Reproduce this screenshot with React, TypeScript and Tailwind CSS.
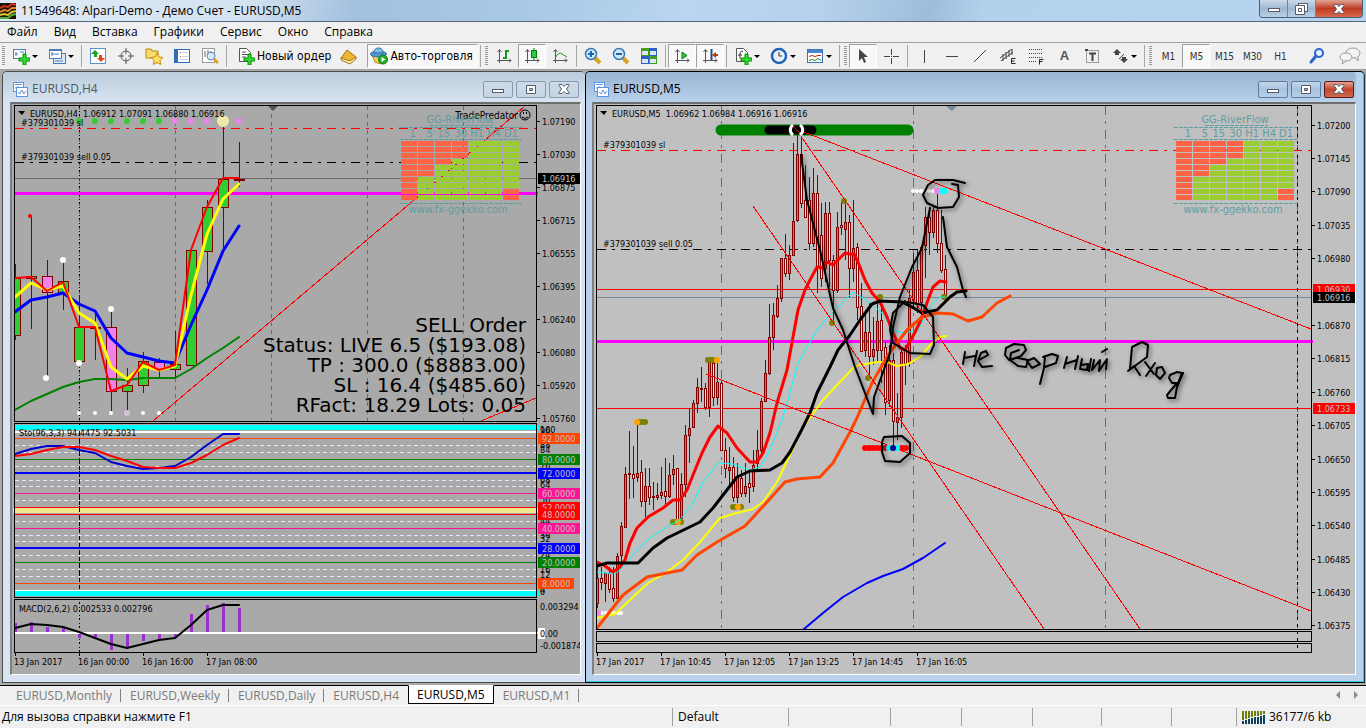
import type { ReactNode } from 'react'
import clsx from 'clsx'

const MAROON = '#800000'
const TEAL = '#5f9ea0'
const ROYAL = '#4169e1'

const MENU = ['Файл', 'Вид', 'Вставка', 'Графики', 'Сервис', 'Окно', 'Справка']

/* ---------- chart data: [high, low, bodyTop, bodyBottom, up] ---------- */

type Candle = [number, number, number, number, number]

const H4: Candle[] = [
  [264, 340, 278, 335, 1], [217, 329, 276, 278, 1], [260, 378, 276, 292, 0], [260, 310, 281, 292, 1],
  [295, 361, 327, 361, 1], [312, 360, 327, 327, 1], [308, 411, 327, 391, 0], [368, 411, 385, 391, 1],
  [352, 393, 361, 385, 1], [358, 377, 362, 369, 0], [331, 377, 364, 369, 1], [250, 365, 250, 365, 1],
  [200, 284, 207, 251, 1], [121, 250, 179, 207, 1], [142, 187, 179, 180, 1],
]

const M5: Candle[] = [
  [563, 608, 578, 603, 1], [567, 590, 578, 582, 0], [573, 602, 573, 583, 1], [567, 593, 573, 589, 0],
  [567, 602, 588, 598, 0], [553, 598, 556, 598, 1], [522, 563, 526, 555, 1], [467, 527, 474, 527, 1],
  [431, 499, 473, 474, 0], [446, 498, 474, 478, 0], [422, 482, 473, 477, 1], [460, 507, 472, 501, 0],
  [468, 517, 486, 501, 1], [468, 505, 486, 497, 0], [482, 510, 496, 497, 0], [483, 500, 495, 497, 1],
  [467, 499, 492, 495, 1], [458, 504, 491, 496, 0], [463, 498, 475, 496, 1], [455, 485, 469, 474, 1],
  [468, 520, 468, 520, 0], [473, 520, 484, 518, 1], [425, 497, 435, 484, 1], [408, 463, 428, 435, 1],
  [400, 428, 403, 427, 1], [378, 413, 387, 403, 1], [367, 402, 388, 389, 0], [383, 410, 388, 407, 0],
  [362, 417, 362, 407, 1], [362, 406, 363, 397, 0], [360, 405, 382, 397, 1], [381, 450, 383, 450, 0],
  [438, 478, 450, 468, 0], [447, 487, 467, 470, 1], [457, 502, 467, 497, 0], [463, 503, 477, 497, 1],
  [470, 497, 478, 493, 0], [463, 497, 486, 493, 1], [473, 503, 483, 487, 0], [450, 492, 465, 486, 1],
  [430, 470, 450, 463, 1], [398, 453, 401, 450, 1], [360, 402, 373, 401, 1], [304, 375, 337, 373, 1],
  [303, 350, 315, 337, 1], [285, 318, 298, 316, 1], [258, 302, 258, 298, 1], [234, 277, 258, 273, 0],
  [245, 280, 255, 273, 1], [143, 256, 221, 255, 1], [130, 222, 154, 220, 1], [138, 208, 154, 203, 0],
  [165, 218, 200, 217, 0], [177, 250, 200, 243, 0], [168, 247, 193, 243, 1], [175, 293, 193, 267, 0],
  [203, 287, 235, 278, 0], [202, 282, 213, 268, 1], [202, 287, 213, 260, 0], [255, 322, 260, 290, 0],
  [212, 293, 227, 290, 1], [202, 235, 225, 227, 0], [200, 260, 222, 229, 1], [215, 297, 222, 268, 0],
  [200, 282, 248, 268, 1], [243, 320, 247, 307, 0], [283, 352, 306, 351, 0], [313, 357, 332, 350, 1],
  [303, 375, 332, 356, 0], [317, 365, 349, 356, 1], [300, 363, 321, 350, 1], [300, 383, 320, 350, 0],
  [342, 415, 347, 402, 0], [345, 407, 360, 400, 1], [353, 446, 360, 421, 0], [393, 440, 417, 422, 1],
  [347, 428, 352, 417, 1], [345, 385, 348, 363, 0], [290, 367, 298, 362, 1], [253, 307, 272, 300, 1],
  [250, 313, 270, 303, 0], [245, 313, 247, 302, 1], [207, 278, 217, 245, 1], [212, 255, 217, 232, 0],
  [207, 238, 210, 232, 1], [193, 253, 210, 243, 0], [210, 273, 243, 270, 0], [255, 297, 269, 297, 0],
]

const H4_PRICES = ['1.07190', '1.07030', '1.06875', '1.06715', '1.06555', '1.06395', '1.06240', '1.06080', '1.05920', '1.05760']
const M5_PRICES: [string, number][] = [
  ['1.07200', 125], ['1.07145', 158], ['1.07090', 191], ['1.07035', 225], ['1.06980', 258], ['1.06870', 325],
  ['1.06815', 358], ['1.06760', 392], ['1.06705', 425], ['1.06650', 459], ['1.06595', 492], ['1.06540', 525],
  ['1.06485', 559], ['1.06430', 592], ['1.06375', 625],
]

const STO_TAGS: [string, number, string, number][] = [
  ['92.0000', 438, '#ff4500', 42], ['80.0000', 459, '#008000', 42], ['72.0000', 473, '#0000ff', 42],
  ['60.0000', 493, '#ff1493', 42], ['52.0000', 507, '#ff0000', 42], ['48.0000', 514, '#ff0000', 42],
  ['40.0000', 528, '#ff1493', 42], ['28.0000', 548, '#0000ff', 42], ['20.0000', 562, '#008000', 42],
  ['8.0000', 583, '#ff4500', 36],
]
const STO_SCALE: [string, number][] = [
  ['100', 430], ['96', 431], ['88', 445], ['84', 450], ['76', 466], ['68', 480], ['64', 485], ['56', 500],
  ['44', 521], ['36', 535], ['32', 539], ['24', 555], ['16', 570], ['12', 575], ['4', 590], ['0', 592],
]
const STO_DASHES = [445, 452, 466, 480, 486, 500, 521, 535, 541, 555, 569, 576]

const MACD = [623, 622, 627, 628, 638, 637, 650, 648, 641, 640, 637, 614, 605, 603, 608]

/* ---------- chart pieces ---------- */

function Label({ x, y, children, fill = '#000' }: { x: number; y: number; children: ReactNode; fill?: string }) {
  return (
    <text x={x} y={y} fill={fill} className="text-[9px] whitespace-pre">
      {children}
    </text>
  )
}

function PriceTag({ x, y, text, fill, width = 42, color = '#c0c0c0' }: { x: number; y: number; text: string; fill: string; width?: number; color?: string }) {
  return (
    <g>
      <rect x={x} y={y - 5} width={width} height={11} fill={fill} />
      <Label x={x + 4} y={y + 4} fill={color}>{text}</Label>
    </g>
  )
}

function Candles({ data, x0, step, half, up, down }: { data: Candle[]; x0: number; step: number; half: number; up: string; down: string }) {
  return (
    <g stroke={MAROON} strokeWidth={1} shapeRendering="crispEdges">
      {data.map(([hi, lo, top, bottom, isUp], i) => {
        const x = x0 + i * step
        return (
          <g key={i}>
            <line x1={x} x2={x} y1={hi} y2={lo} />
            <rect x={x - half} y={top + 0.5} width={half * 2} height={Math.max(bottom - top, 1)} fill={isUp ? up : down} />
          </g>
        )
      })}
    </g>
  )
}

function Poly({ points, color, width }: { points: string; color: string; width: number }) {
  return <polyline points={points} fill="none" stroke={color} strokeWidth={width} strokeLinejoin="round" strokeLinecap="round" />
}

function Dots({ xs, y, r, fill }: { xs: number[]; y: number; r: number; fill: string }) {
  return <>{xs.map((x) => <circle key={x} cx={x} cy={y} r={r} fill={fill} />)}</>
}

// how many rows from the top are red, column by column
const RIVER_RED = [10, 6, 4, 3, 0, 0, 0]
const RIVER_HEAD = ['1', '5', '15', '30', 'H1', 'H4', 'D1']

function RiverFlow({ x }: { x: number }) {
  return (
    <g>
      <g fill={TEAL} className="font-['DejaVu_Sans_Condensed','DejaVu_Sans',sans-serif] text-[11px]">
        <text x={x + 59} y={123} textAnchor="middle">GG-RiverFlow</text>
        {RIVER_HEAD.map((h, i) => (
          <text key={h} x={x + 15 + i * 17} y={137} textAnchor="end">{h}</text>
        ))}
        <text x={x + 57} y={213} textAnchor="middle">www.fx-ggekko.com</text>
      </g>
      <g stroke={TEAL} strokeDasharray="4 1" shapeRendering="crispEdges">
        <path d={`M${x + 29} 125.5h63M${x - 2} 127.5h123M${x - 2} 139.5h123M${x - 2} 203.5h123`} />
      </g>
      {RIVER_RED.map((red, c) =>
        Array.from({ length: 10 }, (_, r) => (
          <rect
            key={`${c}-${r}`}
            x={x + c * 17}
            y={141 + r * 6}
            width={16}
            height={5}
            fill={r < red || (c === 6 && r > 7) ? '#ff6347' : '#9acd32'}
          />
        )),
      )}
    </g>
  )
}

function H4Chart() {
  return (
    <svg viewBox="12 104 568 570" className="block h-auto w-full bg-[#a9a9a9] font-['DejaVu_Sans_Condensed','DejaVu_Sans',sans-serif]" role="img" aria-label="EURUSD,H4">
      <g shapeRendering="crispEdges" fill="none">
        <path d="M79.5 106V421M175.5 106V421M271.5 106V421M367.5 106V421M463.5 106V421" stroke={ROYAL} strokeDasharray="4 4" />
        <path d="M79.5 106V652" stroke="#000" strokeDasharray="2 3 1 2" />
        <path d="M15 128.5H536" stroke="#f00" strokeDasharray="9 6 3 6" />
        <path d="M15 162.5H536" stroke="#000" strokeDasharray="9 6 3 6" />
        <path d="M15 178.5H536" stroke="#696969" />
        <path d="M15 193.5H538" stroke="#f0f" strokeWidth={3} />
        <path d="M153 421L524 107M481 421L536 398" stroke="#f00" />
      </g>
      <path d="M268 106h10l-5 5z" fill="#555" />

      <clipPath id="h4-plot"><rect x="15" y="106" width="521" height="315" /></clipPath>
      <g clipPath="url(#h4-plot)">
        <Candles data={H4} x0={15.5} step={16} half={5} up="#32cd32" down="#ee82ee" />
        <Poly color="#008000" width={2} points="15,410 31,401 47,394 63,387 79,382 95,379 111,379 127,380 143,378 175,378 191,369 207,358 223,348 239,337" />
        <Poly color="#0000ff" width={3} points="15,312 31,300 47,297 63,293 79,304 95,311 111,338 127,353 143,357 159,361 175,363 191,325 207,290 223,251 239,226" />
        <Poly color="#ffff00" width={3} points="15,297 31,283 47,290 63,286 79,313 95,323 111,367 127,379 143,366 159,370 175,366 191,295 207,234 223,199 239,184" />
        <Poly color="#ff0000" width={2} points="15,278 31,277 47,291 63,282 79,327 95,327 111,391 127,385 143,362 159,370 175,365 191,250 207,207 223,178 239,178" />
      </g>
      <path d="M234 179.5h11" stroke={MAROON} strokeWidth={1} />
      <circle cx="30" cy="216" r="2" fill="#f00" />
      <circle cx="46" cy="378" r="3" fill="#fff" />
      <circle cx="63" cy="260" r="3" fill="#fff" />
      <circle cx="79" cy="363" r="3" fill="#fff" />
      <circle cx="111" cy="309" r="3" fill="#fff" />
      <Dots xs={[79, 95, 111, 143, 159]} y={413} r={2} fill="#fff" />
      <Dots xs={[127]} y={413} r={3} fill="#d8bfd8" />
      <Dots xs={[79, 95, 111, 127, 143, 159]} y={121} r={3} fill="#32cd32" />
      <Dots xs={[175, 191, 207, 239]} y={121} r={3} fill="#ee82ee" />
      <circle cx="223" cy="121" r="6" fill="#eee8aa" />

      <path d="M18 111h7l-3 4z" />
      <Label x={30} y={117}>EURUSD,H4  1.06912 1.07091 1.06880 1.06916</Label>
      <Label x={21} y={126}>#379301039 sl</Label>
      <Label x={21} y={160}>#379301039 sell 0.05</Label>
      <text x="518" y="119" textAnchor="end" className="text-[10px]">TradePredator</text>
      <g fill="none" stroke="#000">
        <circle cx="525" cy="115" r="5" />
        <path d="M522 117q3 3 6 0" />
      </g>
      <path d="M523 112h1v2h-1zM526 112h1v2h-1z" />
      <RiverFlow x={401} />

      <g className="font-['DejaVu_Sans',sans-serif] text-[20px]" textAnchor="end">
        <text x="526" y="332">SELL Order</text>
        <text x="526" y="352">Status: LIVE 6.5 ($193.08)</text>
        <text x="526" y="372">TP : 300.0 ($8883.00)</text>
        <text x="526" y="392">SL : 16.4 ($485.60)</text>
        <text x="526" y="412">RFact: 18.29 Lots: 0.05</text>
      </g>

      {/* stochastic */}
      <g shapeRendering="crispEdges" fill="none">
        {STO_DASHES.map((y) => <path key={y} d={`M15 ${y}.5H536`} stroke="#e6e6fa" strokeDasharray="4 3" />)}
        <path d="M15 431.5H536M15 590.5H536" stroke="#fff" strokeWidth={2} />
        <path d="M15 438.5H536M15 583.5H536" stroke="#ff4500" />
        <path d="M15 459.5H536M15 562.5H536" stroke="#008000" />
        <path d="M15 473H536M15 548H536" stroke="#00f" strokeWidth={2} />
        <path d="M15 493.5H536M15 528.5H536" stroke="#ff1493" />
        <path d="M15 507.5H536M15 514.5H536" stroke="#f00" />
        <path d="M13 510.5H538" stroke="#f0e68c" strokeWidth={5} />
        <path d="M79.5 424V597" stroke="#000" strokeDasharray="4 3" />
      </g>
      <path d="M13 427.5H539M13 593.5H539" stroke="#0ff" strokeWidth={5} />
      <Poly color="#0000cd" width={2} points="15,454 31,449 47,446 63,446 79,450 95,453 111,462 127,466 143,469 159,468 175,466 191,457 207,445 223,434 239,434" />
      <Poly color="#ff0000" width={2} points="15,456 31,454 47,450 63,447 79,447 95,450 111,456 127,461 143,467 159,468 175,468 191,463 207,455 223,445 239,438" />
      <Label x={19} y={436}>Sto(96,3,3) 94.4475 92.5031</Label>

      {/* macd */}
      <g stroke="#9932cc" strokeWidth={3} shapeRendering="crispEdges">
        {MACD.map((y, i) => <path key={i} d={`M${15.5 + i * 16} 633V${y}`} />)}
      </g>
      <path d="M15 633H538" stroke="#fff" strokeWidth={2} />
      <Poly color="#000000" width={2} points="15,628 31,624 47,625 63,627 79,632 95,638 111,644 127,648 143,644 159,640 175,638 191,625 207,610 223,605 239,605" />
      <Label x={19} y={612}>MACD(2,6,2) 0.002533 0.002796</Label>

      <g shapeRendering="crispEdges" fill="none" stroke="#000">
        <path d="M14.5 105.5H536.5V421.5H14.5zM14.5 423.5H536.5V597.5H14.5zM14.5 599.5H536.5V652.5H14.5z" />
        <path d="M15.5 652v4M79.5 652v4M143.5 652v4M207.5 652v4" />
        {H4_PRICES.map((p, i) => <path key={p} d={`M537 ${121.5 + i * 33}h3`} />)}
      </g>

      {H4_PRICES.map((p, i) => <Label key={p} x={542} y={125 + i * 33}>{p}</Label>)}
      <PriceTag x={538} y={178} text="1.06916" fill="#000" />
      {STO_SCALE.map(([t, y]) => <Label key={t} x={540} y={y + 3}>{t}</Label>)}
      {STO_TAGS.map(([t, y, fill, w]) => <PriceTag key={t} x={538} y={y} text={t} fill={fill} width={w} />)}
      <Label x={540} y={610}>0.003294</Label>
      <rect x="538" y="628" width="7" height="11" fill="#fff" />
      <Label x={540} y={637}>0.00</Label>
      <Label x={540} y={649}>-0.001874</Label>

      <Label x={14} y={665}>13 Jan 2017</Label>
      <Label x={78} y={665}>16 Jan 00:00</Label>
      <Label x={142} y={665}>16 Jan 16:00</Label>
      <Label x={206} y={665}>17 Jan 08:00</Label>
    </svg>
  )
}

function Handwriting() {
  return (
    <g fill="none" stroke="#000" strokeWidth={2} strokeLinecap="round" strokeLinejoin="round" className="drop-shadow-[2px_2px_2px_rgba(0,0,0,0.5)]">
      <path d="M801 155L807 200L820 250L833 308L843 330L855 367L873 414L874 397L890 353L893 327L900 297L912 267L922 248L927 223L930 208" />
      <path d="M943 217L947 247L957 267L963 290L966 297" />
      <path d="M965 183L953 180H935L928 185L923 195L927 203L938 208L953 207L959 197L958 185L952 184" />
      <path d="M905 301L893 313L890 330L893 343L910 353L930 354L934 345L933 317L923 305L907 302" />
      <path d="M882 442L884 437L902 436L910 443V453L900 462L885 461L882 452z" />
      {/* не верный вход */}
      <path d="M965 352L963 364M964 358L975 356M977 351L974 366M979 360L988 355L986 351L981 353L978 361L982 367L992 366" />
      <path d="M1009 360L1005 355L1006 348L1014 344L1024 345L1026 350L1021 356L1010 360L1011 353L1019 350M1018 358L1028 360L1026 367L1018 366L1010 360" />
      <path d="M1027 361L1034 358L1040 364L1032 368L1027 361M1045 356L1044 368L1040 384M1043 357L1052 354L1058 356L1056 363L1045 367" />
      <path d="M1067 357L1064 368M1065 364L1077 360M1078 356L1075 369M1082 359L1080 369L1087 370L1088 364L1081 365M1091 359L1089 371" />
      <path d="M1094 360L1092 370L1100 360L1099 371L1107 359L1106 369M1102 352L1107 349" />
      <path d="M1130 369L1132 347L1142 342L1148 345L1147 357L1128 371L1134 366L1140 375" />
      <path d="M1145 362L1154 374M1155 363L1146 376M1157 368L1162 367L1165 373L1160 379L1156 375z" />
      <path d="M1170 375L1177 372L1182 373L1178 383L1172 383L1169 378zM1183 373L1177 387L1175 398L1168 398L1167 395L1177 383" />
    </g>
  )
}

function M5Chart() {
  return (
    <svg viewBox="594 104 761 570" className="block h-auto w-full bg-[#c0c0c0] font-['DejaVu_Sans_Condensed','DejaVu_Sans',sans-serif]" role="img" aria-label="EURUSD,M5">
      <g shapeRendering="crispEdges" fill="none">
        <path d="M721.5 106V629M913.5 106V629M1105.5 106V629M1297.5 106V629" stroke={ROYAL} strokeDasharray="9 6 3 6" />
        <path d="M1297.5 106V652" stroke="#000" strokeDasharray="3 4" />
        <path d="M597 150.5H1311" stroke="#f00" strokeDasharray="9 6 3 6" />
        <path d="M597 249.5H1311" stroke="#000" strokeDasharray="9 6 3 6" />
        <path d="M597 289.5H1311M597 408.5H1311" stroke="#f00" />
        <path d="M597 297.5H1311" stroke="#778899" />
        <path d="M597 341.5H1313" stroke="#f0f" strokeWidth={3} />
      </g>
      <path d="M946 106h11l-5 5z" fill="#778899" />
      <path d="M721 130H908" stroke="#008000" strokeWidth={11} strokeLinecap="round" />
      <path d="M769 130H812" stroke="#000" strokeWidth={9} strokeLinecap="round" />

      <clipPath id="m5-plot"><rect x="597" y="106" width="714" height="523" /></clipPath>
      <g clipPath="url(#m5-plot)">
        <Candles data={M5} x0={597.5} step={4} half={1} up="#32cd32" down="#ffe4e1" />
        <Dots xs={[639, 642, 645]} y={422} r={3} fill="#808000" />
        <Dots xs={[637]} y={422} r={3} fill="#ffa500" />
        <Dots xs={[708, 711, 714]} y={360} r={3} fill="#808000" />
        <Dots xs={[717]} y={360} r={3} fill="#ffa500" />
        <Dots xs={[673, 676, 681]} y={522} r={3} fill="#808000" />
        <Dots xs={[678]} y={522} r={3} fill="#ffa500" />
        <Dots xs={[733, 736, 741]} y={507} r={3} fill="#808000" />
        <Dots xs={[738]} y={507} r={3} fill="#ffa500" />
        <circle cx="844" cy="201" r="3" fill="#808000" />
        <circle cx="832" cy="323" r="3" fill="#808000" />
        <circle cx="880" cy="297" r="3" fill="#808000" />
        <circle cx="868" cy="378" r="3" fill="#808000" />
        <circle cx="944" cy="297" r="3" fill="#808000" />
        <Dots xs={[602, 606, 610, 614, 618, 621]} y={613} r={2} fill="#fff" />
        <circle cx="598" cy="613" r="3" fill="#ee82ee" />

        <Poly color="#0000ff" width={2} points="804,629 823,613 843,597 867,583 883,576 903,569 923,558 945,543" />
        <Poly color="#00ffff" width={1} points="597,572 615,574 622,568 637,550 650,538 670,525 680,520 693,503 703,482 718,463 733,464 750,470 760,467 770,450 782,420 787,403 798,363 817,330 828,317 840,305 853,292 870,303 882,313 893,330 905,333 918,330 927,313 933,303 940,297 945,297" />
        <Poly color="#ffff00" width={2} points="597,618 615,614 648,583 667,572 683,560 700,542 720,518 733,514 753,509 763,502 777,482 790,455 803,427 823,400 840,382 855,366 877,362 887,362 897,366 908,364 920,357 932,343 940,337 946,336" />
        <Poly color="#ff0000" width={3} points="597,562 605,566 613,572 620,567 625,560 630,543 637,528 648,517 663,508 673,500 680,500 687,490 693,475 702,453 710,437 718,426 727,433 737,448 750,462 757,462 763,453 770,433 777,403 787,370 793,337 798,310 805,290 810,280 817,267 822,268 827,262 833,265 845,253 850,254 854,254 858,262 865,280 872,293 880,302 887,317 893,333 900,348 905,350 912,338 920,322 928,300 933,287 940,281 946,282" />
        <Poly color="#000000" width={3} points="597,566 607,563 638,563 653,548 667,538 700,522 713,508 737,477 750,471 770,470 782,463 790,452 800,433 810,413 817,393 830,367 838,350 850,335 860,320 872,304 880,301 902,302 912,307 922,313 937,310 950,297 957,292 966,291" />
        <Poly color="#ff4500" width={3} points="597,628 623,595 647,577 682,570 697,555 717,542 745,526 767,502 785,482 797,479 820,477 833,463 850,432 857,418 872,383 888,355 907,330 922,317 937,313 953,314 968,321 982,317 997,303 1010,296" />
        <path d="M796 129L1311 329M796 129L1140 629M753 206L1044 629M706 374L1311 611" stroke="#f00" shapeRendering="crispEdges" />
      </g>

      <circle cx="797" cy="130" r="4" fill="#000" />
      <path d="M793 125a6 6 0 0 0 0 10M800 125a6 6 0 0 1 0 10" fill="none" stroke="#fff" strokeWidth={3} />
      <path d="M794 127L800 133" stroke="#f00" />
      <Dots xs={[913, 917, 921, 925, 929, 933]} y={191} r={2} fill="#fff" />
      <circle cx="937" cy="191" r="3" fill="#ee82ee" />
      <Dots xs={[942, 945]} y={191} r={3} fill="#0ff" />
      <Dots xs={[865, 869, 873, 877, 881, 885, 902, 906]} y={448} r={3} fill="#f00" />
      <Dots xs={[889, 897]} y={448} r={3} fill="#0ff" />
      <circle cx="893" cy="448" r="3" fill="#00008b" />
      <Handwriting />

      <path d="M600 111h7l-3 4z" />
      <Label x={612} y={117}>EURUSD,M5  1.06962 1.06984 1.06916 1.06916</Label>
      <Label x={603} y={148}>#379301039 sl</Label>
      <Label x={603} y={247}>#379301039 sell 0.05</Label>
      <RiverFlow x={1176} />

      <g shapeRendering="crispEdges" fill="none" stroke="#000">
        <path d="M596.5 105.5H1311.5V629.5H596.5zM596.5 631.5H1311.5V641.5H596.5zM596.5 643.5H1311.5V652.5H596.5z" />
        <path d="M597.5 652v4M661.5 652v4M725.5 652v4M789.5 652v4M853.5 652v4M917.5 652v4" />
        {M5_PRICES.map(([p, y]) => <path key={p} d={`M1312 ${y}.5h3`} />)}
      </g>
      {M5_PRICES.map(([p, y]) => <Label key={p} x={1317} y={y + 4}>{p}</Label>)}
      <PriceTag x={1313} y={289} text="1.06930" fill="#f00" />
      <PriceTag x={1313} y={297} text="1.06916" fill="#000" />
      <PriceTag x={1313} y={408} text="1.06733" fill="#f00" />

      <Label x={596} y={665}>17 Jan 2017</Label>
      <Label x={660} y={665}>17 Jan 10:45</Label>
      <Label x={724} y={665}>17 Jan 12:05</Label>
      <Label x={788} y={665}>17 Jan 13:25</Label>
      <Label x={852} y={665}>17 Jan 14:45</Label>
      <Label x={916} y={665}>17 Jan 16:05</Label>
    </svg>
  )
}

/* ---------- icons ---------- */

function Icon({ children, size = 18 }: { children: ReactNode; size?: number }) {
  return (
    <svg width={size} height={size} viewBox="0 0 18 18" fill="none" className="shrink-0">
      {children}
    </svg>
  )
}

const Plus = ({ x = 7, y = 7 }: { x?: number; y?: number }) => (
  <path d={`M${x + 4} ${y}h3v4h4v3h-4v4h-3v-4h-4v-3h4z`} fill="#2ee02e" stroke="#0a8a0a" />
)
const Axes = () => <path d="M4.500 3V16M2 13.500H16M2.500 5L4.500 2.500L6.500 5M14 11.500L16 13.500L14 15.500" stroke="#555" />

const NewChartIcon = () => (
  <Icon><rect x="1.500" y="2.500" width="12" height="9" fill="#fff" stroke="#4a7ebb" /><path d="M4 5v4M3 7h3M8 5h4" stroke="#4a7ebb" /><Plus /></Icon>
)
const ProfilesIcon = () => (
  <Icon><rect x="5.500" y="6.500" width="12" height="10" fill="#dce9f8" stroke="#4a7ebb" /><rect x="1.500" y="2.500" width="12" height="9" fill="#fff" stroke="#4a7ebb" /><path d="M2 3h11" stroke="#4a7ebb" strokeWidth={2} /><path d="M4 5v4M3 7h8M7 14h8" stroke="#4a7ebb" /></Icon>
)
const MarketIcon = () => (
  <Icon><rect x="1.500" y="1.500" width="15" height="15" fill="#fff" stroke="#5b8fd0" /><path d="M6 3l4 4h-2v3h-3v-3h-3z" fill="#1aa51a" /><path d="M12 15l-4-4h2v-3h3v3h3z" fill="#e04a1f" /></Icon>
)
const TargetIcon = () => (
  <Icon><circle cx="9" cy="9" r="5" stroke="#555" /><path d="M9 1v6M9 11v6M1 9h6M11 9h6" stroke="#555" /></Icon>
)
const StarFolderIcon = () => (
  <Icon><path d="M1 2h5l1 2h6v7H1z" fill="#f7dc6f" stroke="#b8860b" /><path d="M12 6l2 4 4 .5-3 3 .8 4L12 15.500 8.300 17.500 9 13.500 6 10.500l4-.5z" fill="#ffe066" stroke="#c98a10" /></Icon>
)
const DataIcon = () => (
  <Icon><rect x="1.500" y="2.500" width="15" height="13" fill="#fff" stroke="#2f6fb5" /><path d="M2 3h3v12H2z" fill="#2f6fb5" /><path d="M7 5.500h1M7 9.500h1" stroke="#e04a1f" /><path d="M9 5.500h6M9 9.500h6M7 12.500h8" stroke="#bcd3ee" /></Icon>
)
const TesterIcon = () => (
  <Icon><rect x="1.500" y="1.500" width="12" height="14" fill="#fff" stroke="#999" /><path d="M4 4v6M7 3v5M10 4v3" stroke="#666" /><circle cx="10" cy="9" r="4" fill="#cfe4fa" fillOpacity=".8" stroke="#5c87b8" /><path d="M13 12l4 4" stroke="#d9a520" strokeWidth={3} /></Icon>
)
const OrderIcon = () => (
  <Icon><path d="M2.500 1.500h7l4 4v9h-11z" fill="#fff" stroke="#555" /><path d="M5 5h4M5 7.500h6M5 10h4" stroke="#555" /><Plus /></Icon>
)
const BookIcon = () => (
  <Icon><path d="M1 11L7 3l9 7-6 6z" fill="#efb632" stroke="#a5720c" /><path d="M1 11l9 3 6-4v2l-6 5-9-4z" fill="#fff3c4" stroke="#a5720c" /></Icon>
)
const AutoIcon = () => (
  <Icon><path d="M2 8h13l-2 7q-4 3-8 0z" fill="#f5cf57" stroke="#b98a14" /><ellipse cx="8.500" cy="7" rx="8" ry="3" fill="#4e9ad4" stroke="#2d6ea5" /><path d="M4 6q0-5 4.500-5T13 6z" fill="#7fbde8" stroke="#2d6ea5" /><circle cx="13" cy="12.500" r="4.500" fill="#1fb01f" stroke="#0c7a0c" /><path d="M11.500 10v5l4-2.500z" fill="#fff" /></Icon>
)
const BarsIcon = () => <Icon><Axes /><path d="M11 3v9M11 4h3M8 11h3" stroke="#1a9a1a" strokeWidth={2} /></Icon>
const CandleIcon = () => <Icon><Axes /><path d="M11 1v12" stroke="#0c7a0c" /><rect x="8.500" y="3.500" width="5" height="7" fill="#2ecc40" stroke="#0c7a0c" /></Icon>
const LineIcon = () => <Icon><Axes /><path d="M4 11q4-7 7-4l5 3" stroke="#1a9a1a" /></Icon>
const ZoomIcon = ({ minus = false }: { minus?: boolean }) => (
  <Icon><path d="M11 11l5 5" stroke="#d9a520" strokeWidth={4} /><circle cx="7" cy="7" r="5.500" fill="#cfe6fb" stroke="#3a78b5" strokeWidth={1.500} /><path d={minus ? 'M4 7h6' : 'M4 7h6M7 4v6'} stroke="#1d66b0" strokeWidth={2} /></Icon>
)
const TileIcon = () => (
  <Icon><path d="M1 1h8v8H1zM9 9h8v8H9z" fill="#3f9e1f" /><path d="M9 1h8v8H9zM1 9h8v8H1z" fill="#2d5fc4" /><path d="M2 4h6v4H2zM10 4h6v4h-6zM2 12h6v4H2zM10 12h6v4h-6z" fill="#dbe9f7" /></Icon>
)
const ScrollIcon = () => <Icon><Axes /><path d="M9 5v7l5-3.500z" fill="#2ecc40" stroke="#0c7a0c" /></Icon>
const ShiftIcon = () => <Icon><Axes /><path d="M10.500 2v11" stroke="#1d4f8c" strokeWidth={2} /><path d="M11 8l4-3v2h2v2h-2v2z" fill="#c0390b" /></Icon>
const IndicatorIcon = () => (
  <Icon><path d="M2.500 1.500h7l4 4v9h-11z" fill="#fff" stroke="#555" /><path d="M9 4.500q-3-1-3 3v4M4 8h4" stroke="#333" /><Plus /></Icon>
)
const ClockIcon = () => (
  <Icon><circle cx="9" cy="9" r="7" fill="#fff" stroke="#1e63b8" strokeWidth={2.500} /><circle cx="9" cy="9" r="5" fill="#e3f0fc" /><path d="M9 5v4h3" stroke="#333" /></Icon>
)
const TemplateIcon = () => (
  <Icon><rect x="1.500" y="2.500" width="15" height="13" fill="#fff" stroke="#3f74b8" /><path d="M2 3h14v3H2z" fill="#4a86cf" /><path d="M3 9.500l3-1 3 1 3-1 3 0" stroke="#b03010" /><path d="M3 13.500l3-1 3 1 3-2 3 2" stroke="#2a8a2a" /></Icon>
)
const CursorIcon = () => <Icon><path d="M5 2v12l3-3 2 5 2-1-2-5h4z" fill="#444" /></Icon>
const CrossIcon = () => <Icon><path d="M9.500 2v6M9.500 11v6M2 9.500h6M11 9.500h6M9 9.500h1" stroke="#444" /></Icon>
const VLineIcon = () => <Icon><path d="M9.500 3v13" stroke="#444" /></Icon>
const HLineIcon = () => <Icon><path d="M3 9.500h12" stroke="#444" /></Icon>
const TrendIcon = () => <Icon><path d="M3 15L15 3" stroke="#444" /></Icon>
const ChannelIcon = () => (
  <Icon><path d="M1 11L13 2M2 14L14 5M4 7l0 7M7 5l0 7M10 3l0 7M13 2v6" stroke="#444" /><path d="M16.500 11.500h-4v5h4M12.500 14h3" stroke="#222" /></Icon>
)
const FiboIcon = () => (
  <Icon><path d="M2 2.500h14M2 6.500h14M2 10.500h14M2 14.500h8" stroke="#444" strokeDasharray="1 1" /><path d="M16.500 12.500h-4v5M12.500 14.500h3" stroke="#222" /></Icon>
)
const LabelIcon = () => <Icon><rect x="3.500" y="3.500" width="12" height="12" stroke="#444" strokeDasharray="1 1" /><path d="M6 6.500h7M9.500 6v8" stroke="#444" strokeWidth={2} /><path d="M2 2h3v2H2z" fill="#444" /></Icon>
const ArrowsIcon = () => <Icon><path d="M6 2l4 4h-2v2h-4v-2h-2zM13 16l-4-4h2v-2h4v2h2z" fill="#444" /><path d="M8 12l5-5" stroke="#444" /></Icon>
const SearchIcon = () => <Icon><circle cx="11" cy="6" r="4" fill="#e8f1fd" stroke="#2a62d0" strokeWidth={2} /><path d="M8 9l-5 6" stroke="#2a62d0" strokeWidth={3} strokeLinecap="round" /></Icon>
const ChatIcon = () => (
  <svg width={24} height={18} viewBox="0 0 24 18" fill="#f4f4f4" stroke="#999">
    <ellipse cx="15" cy="6" rx="7" ry="5" /><path d="M17 10l3 4v-5" /><ellipse cx="8" cy="10" rx="6" ry="4" /><path d="M5 13l-1 4 4-3" />
  </svg>
)
const ChartWindowIcon = () => (
  <svg width={15} height={15} viewBox="0 0 15 15" fill="#fff" stroke="#5b94dd">
    <rect x="0.500" y="0.500" width="10" height="9" /><path d="M2 2.500h7M3 5v2M5 4v3" /><rect x="3.500" y="5.500" width="11" height="9" /><path d="M5 10l2 2 2-4 2 4 2-3" fill="none" />
  </svg>
)
const LogoIcon = () => (
  <svg width={16} height={16} viewBox="0 0 16 16" fill="none" strokeWidth={2} className="bg-[#1b1408]">
    <path d="M0 5l4-2 4 1 4-3 4 1" stroke="#d8321c" /><path d="M0 9l4-2 4 1 4-3 4 0" stroke="#e8862a" />
    <path d="M0 12l4-1 4 1 4-3 4-1" stroke="#d6c832" /><path d="M0 15l4 0 4 0 4-3 4-1" stroke="#4cae34" />
  </svg>
)

/* ---------- toolbar ---------- */

function Tool({ label, children, pressed, drop }: { label: string; children: ReactNode; pressed?: boolean; drop?: boolean }) {
  return (
    <button
      aria-label={label}
      className={clsx(
        'flex h-6 shrink-0 items-center border',
        drop ? 'w-9 gap-[2px] pl-1' : 'w-7 justify-center',
        pressed ? 'border-[#a0a0a0] border-r-white border-b-white bg-[#f8f8f8]' : 'border-transparent',
      )}
    >
      {children}
      {drop && <span className="border-x-[3px] border-t-[3px] border-x-transparent border-t-black" />}
    </button>
  )
}

const Sep = () => <div className="mx-[2px] h-[22px] w-px shrink-0 bg-[#a5a5a5]" />
const Grip = () => <div className="mx-[2px] h-5 w-[3px] shrink-0 bg-[repeating-linear-gradient(to_bottom,#9a9a9a_0_1px,#f0f0f0_1px_2px)]" />

function Toolbar() {
  return (
    <div className="flex h-[27px] items-center overflow-hidden border-b border-[#a0a0a0] bg-[#f0f0f0] font-['DejaVu_Sans_Condensed','DejaVu_Sans',sans-serif]">
      <Grip />
      <Tool label="Новый график" drop><NewChartIcon /></Tool>
      <Tool label="Профили" drop><ProfilesIcon /></Tool>
      <Sep />
      <Tool label="Обзор рынка"><MarketIcon /></Tool>
      <Tool label="Окно данных"><TargetIcon /></Tool>
      <Tool label="Навигатор"><StarFolderIcon /></Tool>
      <Tool label="Терминал"><DataIcon /></Tool>
      <Tool label="Тестер стратегий"><TesterIcon /></Tool>
      <Sep />
      <button className="ml-1 flex h-6 shrink-0 items-center gap-[2px] px-1 text-[12px]">
        <OrderIcon />Новый ордер
      </button>
      <Tool label="MetaEditor"><BookIcon /></Tool>
      <button className="ml-1 flex h-6 w-[111px] shrink-0 items-center gap-[2px] border border-[#a0a0a0] border-r-white border-b-white bg-[#f8f8f8] pl-[2px] text-[12px] whitespace-nowrap">
        <AutoIcon />Авто-торговля
      </button>
      <Sep />
      <Grip />
      <Tool label="Бары"><BarsIcon /></Tool>
      <Tool label="Свечи" pressed><CandleIcon /></Tool>
      <Tool label="Линия"><LineIcon /></Tool>
      <Sep />
      <Tool label="Приблизить"><ZoomIcon /></Tool>
      <Tool label="Отдалить"><ZoomIcon minus /></Tool>
      <Tool label="Расположить окна"><TileIcon /></Tool>
      <Sep />
      <Tool label="Автопрокрутка" pressed><ScrollIcon /></Tool>
      <Tool label="Сдвиг графика" pressed><ShiftIcon /></Tool>
      <Sep />
      <Tool label="Индикаторы" drop><IndicatorIcon /></Tool>
      <Tool label="Периоды" drop><ClockIcon /></Tool>
      <Tool label="Шаблоны" drop><TemplateIcon /></Tool>
      <Sep />
      <Grip />
      <Tool label="Курсор" pressed><CursorIcon /></Tool>
      <Tool label="Перекрестие"><CrossIcon /></Tool>
      <Sep />
      <Tool label="Вертикальная линия"><VLineIcon /></Tool>
      <Tool label="Горизонтальная линия"><HLineIcon /></Tool>
      <Tool label="Трендовая линия"><TrendIcon /></Tool>
      <Tool label="Канал"><ChannelIcon /></Tool>
      <Tool label="Фибоначчи"><FiboIcon /></Tool>
      <Tool label="Текст"><span className="font-['Liberation_Sans',sans-serif] text-[13px] font-bold text-[#555]">A</span></Tool>
      <Tool label="Текстовая метка"><LabelIcon /></Tool>
      <Tool label="Стрелки" drop><ArrowsIcon /></Tool>
      <Sep />
      <Grip />
      {['M1', 'M5', 'M15', 'M30', 'H1'].map((tf) => (
        <Tool key={tf} label={tf} pressed={tf === 'M5'}>
          <span className="text-[10px] text-[#333]">{tf}</span>
        </Tool>
      ))}
      <div className="ml-auto flex shrink-0 items-center gap-3 pr-1">
        <button aria-label="Поиск"><SearchIcon /></button>
        <button aria-label="Чат"><ChatIcon /></button>
      </div>
    </div>
  )
}

/* ---------- windows ---------- */

const MinGlyph = () => <svg width="12" height="9" viewBox="0 0 12 9"><rect x="0.500" y="4.500" width="11" height="3" fill="#fff" stroke="#555b6b" /></svg>
const MaxGlyph = () => <svg width="12" height="9" viewBox="0 0 12 9"><path fillRule="evenodd" d="M1.500 .5h9v8h-9zM4.500 3.500v2h3v-2z" fill="#fff" stroke="#555b6b" /></svg>
const RestoreGlyph = () => <svg width="13" height="12" viewBox="0 0 13 12"><rect x="3.500" y="0.500" width="9" height="8" fill="#fff" stroke="#555b6b" /><path fillRule="evenodd" d="M.5 2.500h9v9h-9zM3.500 5.500v3h3v-3z" fill="#fff" stroke="#555b6b" /></svg>
const CloseGlyph = () => <svg width="12" height="10" viewBox="0 0 12 10"><path d="M1 .5h3l2 2 2-2h3v1L8.500 5 11 8.500v1H8l-2-2-2 2H1v-1L3.500 5 1 1.500z" fill="#fff" stroke="#555b6b" /></svg>

function ChildButtons({ active }: { active?: boolean }) {
  const base = 'flex h-[17px] w-[30px] items-center justify-center rounded-[2px] border'
  const plain = active
    ? 'border-[#5c7a9c] bg-linear-to-b from-[#c3d7ec] via-[#a9c3de] to-[#b7cfe8]'
    : 'border-[#8a99ae] bg-linear-to-b from-[#cddae8] to-[#c6d4e4]'
  return (
    <div className="flex gap-[3px]">
      <button aria-label="Свернуть" className={clsx(base, plain)}><MinGlyph /></button>
      <button aria-label="Развернуть" className={clsx(base, plain)}><MaxGlyph /></button>
      <button
        aria-label="Закрыть"
        className={clsx(base, active ? 'border-[#5a1a1a] bg-linear-to-b from-[#e3a293] via-[#c2472c] to-[#cf6a50]' : plain)}
      >
        <CloseGlyph />
      </button>
    </div>
  )
}

function ChildWindow({ title, active, children }: { title: string; active?: boolean; children: ReactNode }) {
  return (
    <section
      className={clsx(
        'flex flex-col rounded-t-[5px] border',
        active
          ? 'mr-px border-black border-r-[#0b3c4a] bg-[#b9d1ea] pr-2 pl-[6px] shadow-[inset_-1px_-1px_0_#35c8ee]'
          : 'ml-[2px] border-r-0 border-[#4a4a4a] bg-[#d8e4f1] pr-1 pl-[7px]',
      )}
    >
      <header
        className={clsx(
          'flex h-[30px] items-center gap-[4px] rounded-t-[4px] pt-[4px] text-[12px]',
          active
            ? '-ml-[6px] bg-linear-to-b from-[#98b4d2] to-[#b9d1ea] pl-2 text-black'
            : '-mr-1 -ml-[7px] bg-linear-to-b from-[#bccbdb] to-[#d8e4f1] pr-[6px] pl-[10px] text-[#4d5866]',
        )}
      >
        <ChartWindowIcon />
        <h2 className="flex-1">{title}</h2>
        <div className={active ? 'pr-[2px]' : ''}><ChildButtons active={active} /></div>
      </header>
      <div className="border-t-2 border-r border-b border-l-2 border-t-[#6d6d6d] border-r-white border-b-white border-l-[#808080]">
        {children}
      </div>
      <div className="h-[7px]" />
    </section>
  )
}

function Tabs() {
  const tabs = ['Monthly', 'Weekly', 'Daily', 'H4', 'M5', 'M1']
  return (
    <nav className="flex h-[21px] items-start border-t border-b border-t-black border-b-white bg-[#f0f0f0] pl-[7px] text-[12px] leading-[18px] text-[#7a7a7a]">
      {tabs.map((t) => (
        <button
          key={t}
          className={clsx(
            'flex h-[19px] items-center',
            t === 'M5' ? '-mt-px border border-t-white border-black bg-white px-2 text-black' : 'px-[9px]',
            t !== 'M5' && t !== 'H4' && 'bg-[linear-gradient(#808080,#808080)] bg-size-[1px_13px] bg-position-[right_center] bg-no-repeat',
          )}
        >
          EURUSD,{t}
        </button>
      ))}
      <div className="ml-auto flex gap-[14px] pt-[5px] pr-2">
        <button aria-label="Назад" className="border-y-4 border-r-4 border-y-transparent border-r-[#8a8a8a]" />
        <button aria-label="Вперед" className="border-y-4 border-l-4 border-y-transparent border-l-[#8a8a8a]" />
      </div>
    </nav>
  )
}

function StatusBar() {
  const cell = 'h-[18px] border-l border-[#a0a0a0]'
  return (
    <footer className="flex h-[22px] items-center bg-[#f0f0f0] text-[12px] leading-[18px]">
      <div className="flex-1 pl-[2px]">Для вызова справки нажмите F1</div>
      <div className={clsx(cell, 'w-[116px] pl-[5px]')}>Default</div>
      <div className={clsx(cell, 'w-[102px]')} />
      <div className={clsx(cell, 'w-[71px]')} />
      <div className={clsx(cell, 'w-[71px]')} />
      <div className={clsx(cell, 'w-[69px]')} />
      <div className={clsx(cell, 'w-[70px]')} />
      <div className={clsx(cell, 'w-[65px]')} />
      <div className={clsx(cell, 'flex w-[130px] items-center gap-1 pl-[5px]')}>
        <svg width="23" height="13" viewBox="0 0 23 13" shapeRendering="crispEdges">
          {[9, 8, 7, 6, 5, 5, 4, 3].map((h, i) => (
            <g key={i}>
              <rect x={i * 3} y="0" width="2" height={h} fill="#6b7f0e" />
              <rect x={i * 3} y={h + 1} width="2" height={12 - h} fill="#0d3f5e" />
            </g>
          ))}
        </svg>
        36177/6 kb
      </div>
    </footer>
  )
}

export default function App() {
  return (
    <div className="flex min-h-screen flex-col bg-[#f0f0f0] font-['Open_Sans','Noto_Sans',sans-serif] text-black">
      <header className="flex h-[22px] items-start border-b border-[#56677d] bg-[linear-gradient(100deg,#dfe9f4_0%,#d3e2f1_18%,#a3c1df_26%,#a9c8e6_38%,#b9d5ef_50%,#b5d1ec_60%,#9fbddb_68%,#b3d0ec_72%,#b7d4ef_100%)]">
        <div className="flex h-[21px] flex-1 items-center gap-[5px] text-[12px]">
          <LogoIcon />
          <h1>11549648: Alpari-Demo - Демо Счет - EURUSD,M5</h1>
        </div>
        <div className="mr-[3px] flex h-[18px] overflow-hidden rounded-b-[4px] border border-t-0 border-[#4b5f78]">
          <button aria-label="Свернуть" className="flex w-7 items-center justify-center border-r border-[#6e86a3] bg-linear-to-b from-[#c9daea] via-[#9fb8d0] to-[#b8d0e6]"><MinGlyph /></button>
          <button aria-label="Восстановить" className="flex w-7 items-center justify-center border-r border-[#6e86a3] bg-linear-to-b from-[#c9daea] via-[#9fb8d0] to-[#b8d0e6]"><RestoreGlyph /></button>
          <button aria-label="Закрыть" className="flex w-[46px] items-center justify-center bg-linear-to-b from-[#e0a293] via-[#bf3a20] to-[#d8694c]"><CloseGlyph /></button>
        </div>
      </header>

      <nav className="flex h-[21px] items-center gap-4 border-b border-[#a0a0a0] pl-[7px] text-[12px]">
        {MENU.map((m) => <button key={m}>{m}</button>)}
      </nav>

      <Toolbar />

      <main className="grid flex-1 grid-cols-[585fr_781fr] items-start bg-[#ababab] pt-px pb-[2px]">
        <ChildWindow title="EURUSD,H4"><H4Chart /></ChildWindow>
        <ChildWindow title="EURUSD,M5" active><M5Chart /></ChildWindow>
      </main>

      <Tabs />
      <StatusBar />
    </div>
  )
}
